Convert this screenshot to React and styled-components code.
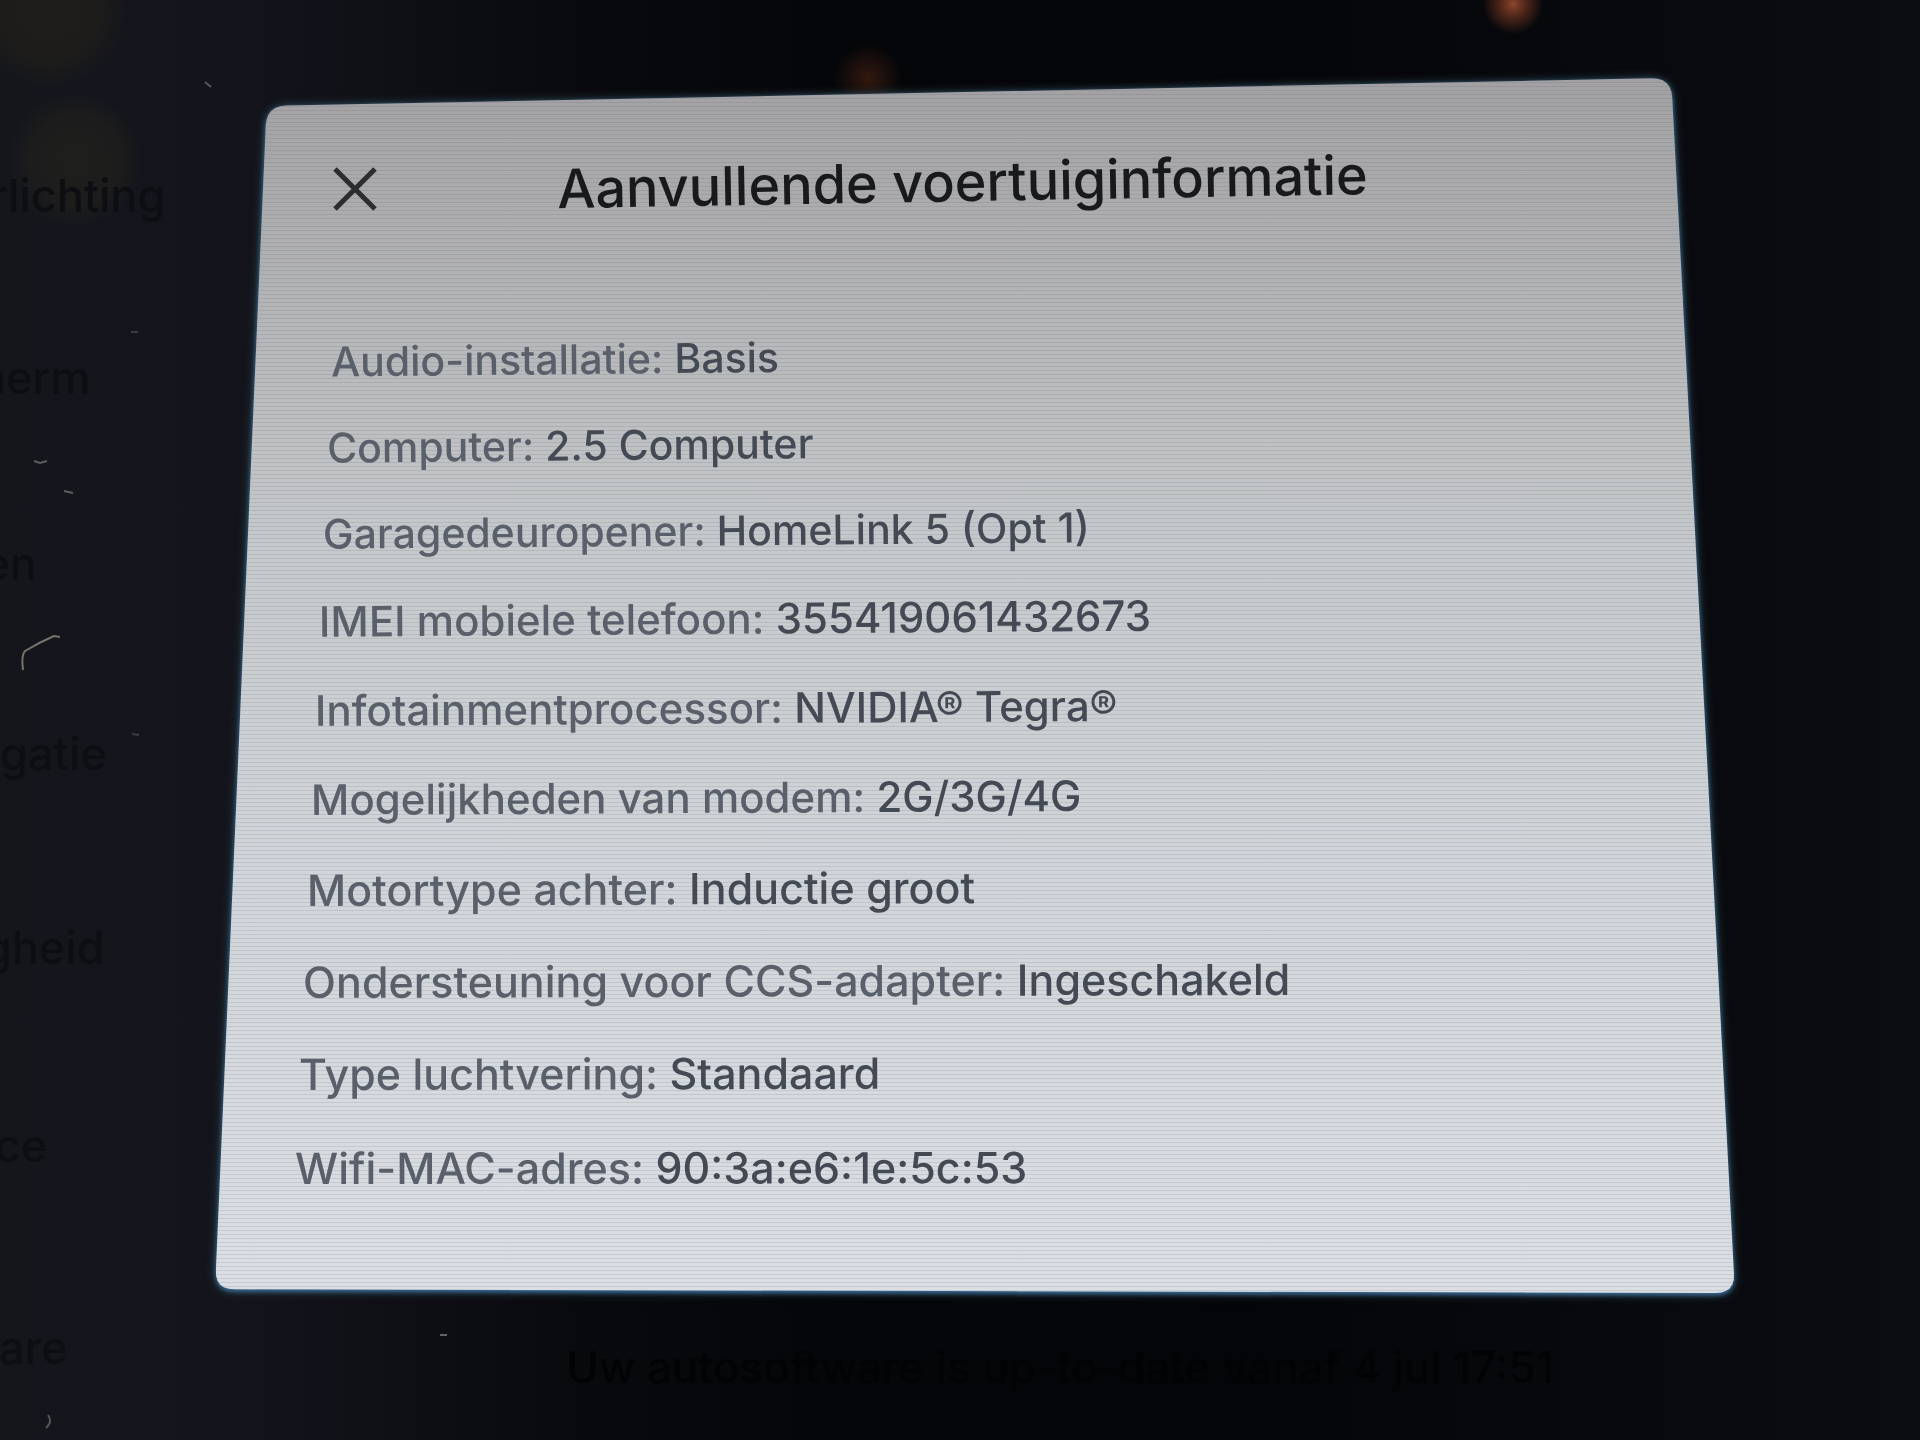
import styled, { createGlobalStyle } from "styled-components";

const menu = ["Verlichting", "Scherm", "Ritten", "Navigatie", "Veiligheid", "Service", "Software"];

const info = [
    { label: "Audio-installatie", value: "Basis" },
    { label: "Computer", value: "2.5 Computer" },
    { label: "Garagedeuropener", value: "HomeLink 5 (Opt 1)" },
    { label: "IMEI mobiele telefoon", value: "355419061432673" },
    { label: "Infotainmentprocessor", value: "NVIDIA® Tegra®" },
    { label: "Mogelijkheden van modem", value: "2G/3G/4G" },
    { label: "Motortype achter", value: "Inductie groot" },
    { label: "Ondersteuning voor CCS-adapter", value: "Ingeschakeld" },
    { label: "Type luchtvering", value: "Standaard" },
    { label: "Wifi-MAC-adres", value: "90:3a:e6:1e:5c:53" },
];

// corners of the tilted panel, in % of its box
const corners = [
    [3.4, 2.3],
    [95.8, 0],
    [100, 100],
    [0, 99.7],
];

// polygon with rounded corners, a quadratic curve cut in a few points
function panelShape() {
    const points = [];
    corners.forEach(([x, y], i) => {
        const ends = [corners[(i + 3) % 4], corners[(i + 1) % 4]].map(([ex, ey]) => {
            const length = Math.hypot((ex - x) * 1.25, ey - y);
            const t = 1.6 / length;
            return [x + (ex - x) * t, y + (ey - y) * t];
        });
        for (let k = 0; k <= 6; k++) {
            const t = k / 6;
            const at = (n) =>
                (1 - t) * (1 - t) * ends[0][n] + 2 * t * (1 - t) * [x, y][n] + t * t * ends[1][n];
            points.push(`${at(0).toFixed(2)}% ${at(1).toFixed(2)}%`);
        }
    });
    return `polygon(${points.join(", ")})`;
}

// the type grows towards the bottom of the panel
function rowSize(step) {
    if (step < 3) return 41;
    if (step < 6) return 42;
    return 43;
}

export default function App() {
    return (
        <>
            <GlobalStyle />
            <Screen>
                <Scratches viewBox="0 0 500 1440" aria-hidden="true">
                    <path d="M23 670 Q21 655 25 651 Q38 643 54 636 L60 637" stroke="#77736b" strokeWidth="2" />
                    <path d="M34 461 L40 463 L47 461" stroke="#5d5d5f" strokeWidth="2" />
                    <path d="M64 491 L73 493" stroke="#5d5d5f" strokeWidth="2" />
                    <path d="M205 82 L211 87" stroke="#56585c" strokeWidth="2" />
                    <path d="M131 332 L138 332" stroke="#3a3c40" strokeWidth="2" />
                    <path d="M132 734 L139 735" stroke="#3a3c40" strokeWidth="2" />
                    <path d="M440 1335 L447 1335" stroke="#606266" strokeWidth="2" />
                    <path d="M48 1415 Q53 1422 46 1428" stroke="#55575b" strokeWidth="2" />
                </Scratches>

                <Menu aria-label="Menu">
                    {menu.map((item, i) => (
                        <MenuItem key={item} href="#" $step={i}>
                            {item}
                        </MenuItem>
                    ))}
                </Menu>

                <Dialog role="dialog" aria-labelledby="titel">
                    <DialogHeader>
                        <CloseButton aria-label="Sluiten">
                            <svg viewBox="0 0 44 44" width="44" height="44" aria-hidden="true">
                                <path d="M2 2 L42 42 M42 2 L2 42" stroke="currentColor" strokeWidth="5" fill="none" />
                            </svg>
                        </CloseButton>
                        <Title id="titel">Aanvullende voertuiginformatie</Title>
                    </DialogHeader>
                    <InfoList>
                        {info.map((row, i) => (
                            <InfoRow key={row.label} $step={i}>
                                {row.label}: <Value>{row.value}</Value>
                            </InfoRow>
                        ))}
                    </InfoList>
                </Dialog>

                <Status>Uw autosoftware is up-to-date vanaf 4 jul 17:51</Status>
            </Screen>
        </>
    );
}

const GlobalStyle = createGlobalStyle`
    * {
        box-sizing: border-box;
    }

    body {
        margin: 0;
        background: #0a0b0f;
        font-family: Inter, "Liberation Sans", sans-serif;
    }
`;

const Screen = styled.main`
    position: relative;
    min-height: 100vh;
    padding: 78px 185px 0 215px;
    overflow: hidden;
    background:
        radial-gradient(circle at 1513px 4px, #8a452c 0, #4a2418 14px, transparent 30px),
        radial-gradient(circle at 868px 78px, #32180f 0, transparent 34px),
        radial-gradient(circle at 50px 10px, #1f1e1c 0, #1d1c1b 50px, transparent 78px),
        radial-gradient(circle at 75px 160px, #1f1f1d 0, #1c1c1c 46px, transparent 68px),
        linear-gradient(90deg, #14161c 0, #14151c 12%, #090a0e 30%, #050609 42%, #040508 65%, #0b0d12 100%);
`;

const Scratches = styled.svg`
    position: absolute;
    top: 0;
    left: 0;
    width: 500px;
    height: 1440px;
    fill: none;
    pointer-events: none;
`;

const Menu = styled.nav`
    position: absolute;
    top: 106px;
    left: 0;
    width: 200px;
    overflow: hidden;
    display: flex;
    flex-direction: column;
`;

const MenuItem = styled.a`
    height: ${({ $step }) => 180 + $step * 4}px;
    line-height: ${({ $step }) => 180 + $step * 4}px;
    margin-left: ${({ $step }) => -66 - $step * 10}px;
    font-size: 45px;
    font-weight: 500;
    color: #0d0e12;
    text-decoration: none;
    white-space: nowrap;
`;

const Dialog = styled.section`
    position: relative;
    z-index: 0;
    padding: 40px 0 78px 80px;
    filter: drop-shadow(0 2px 2px #3a6c9c) drop-shadow(0 0 4px #2c4854);

    &::before {
        content: "";
        position: absolute;
        inset: 0;
        z-index: -1;
        clip-path: ${panelShape()};
        background:
            repeating-linear-gradient(180deg, rgba(70, 85, 100, 0.14) 0 1px, transparent 1px 4px),
            linear-gradient(180deg, #a2a0a3 0, #b3b4b6 18%, #c6c9cb 38%, #d1d5d9 65%, #dbdfe4 100%);
    }
`;

const DialogHeader = styled.header`
    display: flex;
    align-items: center;
    height: 142px;
`;

const CloseButton = styled.button`
    display: flex;
    margin-left: 38px;
    padding: 0;
    border: 0;
    background: none;
    color: #2b2d30;
    cursor: pointer;
`;

const Title = styled.h1`
    flex: 1;
    margin: 0 0 20px 180px;
    font-size: 54px;
    font-weight: 500;
    line-height: 64px;
    color: #17191c;
    transform: rotate(-1deg);
`;

const InfoList = styled.ul`
    margin: 60px 0 0;
    padding: 0;
    list-style: none;
`;

/* rows get taller and move left towards the bottom of the tilted panel */
const InfoRow = styled.li`
    height: ${({ $step }) => 85 + $step}px;
    line-height: ${({ $step }) => 85 + $step}px;
    padding-left: ${({ $step }) => 36 - $step * 4}px;
    font-size: ${({ $step }) => rowSize($step)}px;
    font-weight: 500;
    color: #59606a;
    white-space: nowrap;
    transform: rotate(${({ $step }) => $step * 0.06 - 0.6}deg);
    transform-origin: left center;
`;

const Value = styled.span`
    color: #434a54;
`;

const Status = styled.p`
    margin: 42px 0 0 170px;
    font-size: 44px;
    line-height: 64px;
    font-weight: 500;
    text-align: center;
    color: #020305;
`;
